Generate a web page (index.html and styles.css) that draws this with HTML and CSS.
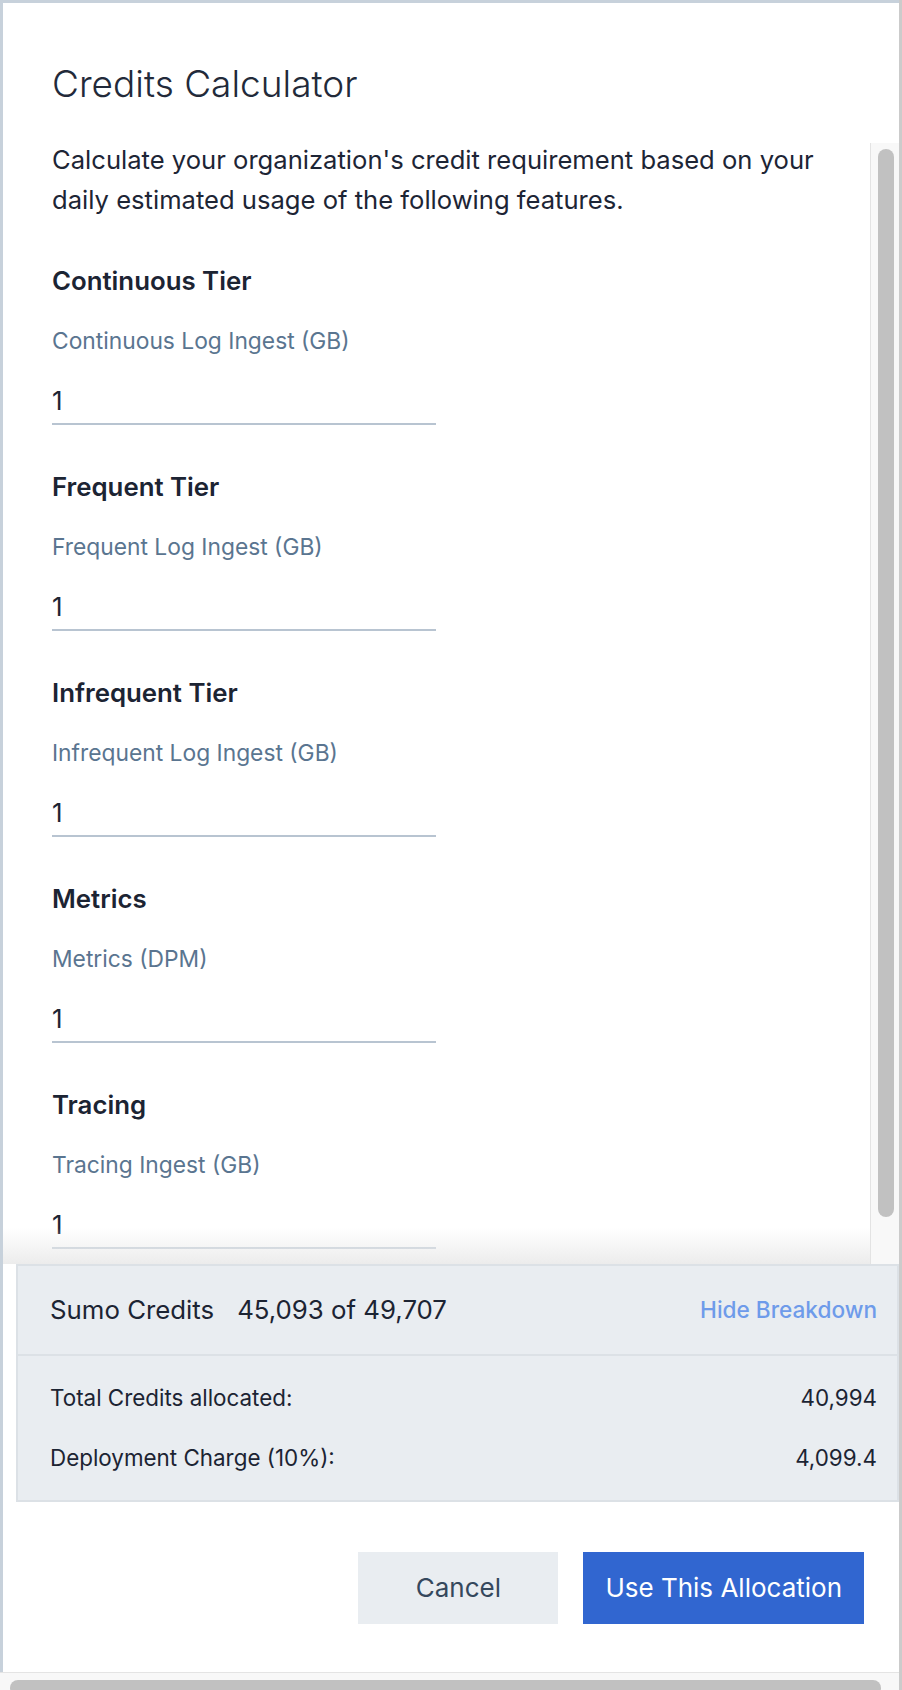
FILE: index.html
```html
<!DOCTYPE html>
<html lang="en">
<head>
<meta charset="utf-8">
<title>Credits Calculator</title>
<link rel="stylesheet" href="styles.css">
</head>
<body>
<div class="frame">
  <div class="dialog">
    <header class="dialog-header">
      <h1 class="title">Credits Calculator</h1>
    </header>
    <div class="scroll-wrap">
      <div class="scroll">
        <p class="intro">Calculate your organization's credit requirement based on your daily estimated usage of the following features.</p>
        <div class="sections">
          <section class="tier">
            <h2 class="tier-title">Continuous Tier</h2>
            <label class="field-label">Continuous Log Ingest (GB)</label>
            <input class="field-input" type="text" value="1">
          </section>
          <section class="tier">
            <h2 class="tier-title">Frequent Tier</h2>
            <label class="field-label">Frequent Log Ingest (GB)</label>
            <input class="field-input" type="text" value="1">
          </section>
          <section class="tier">
            <h2 class="tier-title">Infrequent Tier</h2>
            <label class="field-label">Infrequent Log Ingest (GB)</label>
            <input class="field-input" type="text" value="1">
          </section>
          <section class="tier">
            <h2 class="tier-title">Metrics</h2>
            <label class="field-label">Metrics (DPM)</label>
            <input class="field-input" type="text" value="1">
          </section>
          <section class="tier">
            <h2 class="tier-title">Tracing</h2>
            <label class="field-label">Tracing Ingest (GB)</label>
            <input class="field-input" type="text" value="1">
          </section>
        </div>
      </div>
      <div class="vscroll"><div class="vscroll-thumb"></div></div>
    </div>
    <div class="summary">
      <div class="summary-head">
        <span class="summary-name">Sumo Credits</span>
        <span class="summary-value">45,093 of 49,707</span>
        <span class="summary-toggle">Hide Breakdown</span>
      </div>
      <div class="breakdown">
        <div class="breakdown-row"><span>Total Credits allocated:</span><span>40,994</span></div>
        <div class="breakdown-row"><span>Deployment Charge (10%):</span><span>4,099.4</span></div>
      </div>
    </div>
    <footer class="dialog-footer">
      <button class="btn btn-secondary" type="button">Cancel</button>
      <button class="btn btn-primary" type="button">Use This Allocation</button>
    </footer>
  </div>
  <div class="hscroll"><div class="hscroll-thumb"></div></div>
</div>
</body>
</html>
```

FILE: styles.css
```css
* { box-sizing: border-box; }

html, body {
  margin: 0;
  padding: 0;
  background: #ffffff;
}

body {
  width: 902px;
  height: 1690px;
  overflow: hidden;
  font-family: Inter, "Noto Sans", "Liberation Sans", sans-serif;
  color: #1c2433;
}

.frame {
  display: flex;
  flex-direction: column;
  height: 1690px;
  border-right: 3px solid #cbcbcb;
}

.dialog {
  flex: 1;
  display: flex;
  flex-direction: column;
  border-top: 3px solid #c7d1db;
  border-left: 3px solid #c7d1db;
  min-height: 0;
}

.dialog-header {
  padding: 57px 49px 35px;
}

.title {
  margin: 0;
  font-family: "Inter Light", Inter, "Noto Sans", sans-serif;
  font-size: 37px;
  line-height: 48px;
  font-weight: 300;
  color: #222a3a;
}

.scroll-wrap {
  position: relative;
  display: flex;
  height: 1121px;
  flex: none;
}

.scroll-wrap::after {
  content: "";
  position: absolute;
  left: 0;
  right: 29px;
  bottom: 0;
  height: 36px;
  background: linear-gradient(to bottom, rgba(236, 236, 236, 0), rgba(236, 236, 236, 1));
  pointer-events: none;
}

.scroll {
  flex: 1;
  min-width: 0;
  overflow: hidden;
  padding: 0 0 58px 49px;
}

.vscroll {
  flex: none;
  width: 29px;
  background: #f8f8f8;
  border-left: 1px solid #e3e3e3;
  padding: 6px 5px 0 7px;
}

.vscroll-thumb {
  height: 1068px;
  border-radius: 8px;
  background: #c1c1c1;
}

.intro {
  margin: -3px 0 45px;
  font-size: 25.6px;
  line-height: 40px;
  color: #1d2535;
}

.sections {
  display: flex;
  flex-direction: column;
  gap: 46px;
}

.tier {
  display: flex;
  flex-direction: column;
  align-items: flex-start;
}

.tier-title {
  margin: 0 0 28px;
  font-size: 25.8px;
  line-height: 32px;
  font-weight: 600;
  color: #1c2433;
}

.field-label {
  display: block;
  margin: 0 0 23px;
  font-size: 22.8px;
  line-height: 32px;
  color: #5a7590;
}

.field-input {
  display: block;
  width: 384px;
  height: 45px;
  margin: 0;
  padding: 0 0 3px;
  border: 0;
  border-bottom: 2px solid #b8c4d1;
  background: transparent;
  font-family: inherit;
  font-size: 26px;
  line-height: 40px;
  color: #1c2433;
  outline: none;
}

.summary {
  flex: none;
  margin-left: 13px;
  background: #e9edf1;
  border: 2px solid #dce1e6;
}

.summary-head {
  display: flex;
  align-items: center;
  height: 90px;
  padding: 0 20px 0 32px;
  border-bottom: 2px solid #dce1e6;
  font-size: 25.8px;
  line-height: 32px;
}

.summary-name {
  color: #1c2433;
}

.summary-value {
  margin-left: 23px;
  color: #1c2433;
}

.summary-toggle {
  margin-left: auto;
  font-size: 22.6px;
  font-weight: 500;
  color: #6e9bea;
}

.breakdown {
  display: flex;
  flex-direction: column;
  gap: 28px;
  padding: 26px 20px 26px 32px;
}

.breakdown-row {
  display: flex;
  justify-content: space-between;
  font-size: 22.4px;
  line-height: 32px;
  color: #1c2433;
}

.dialog-footer {
  flex: none;
  display: flex;
  justify-content: flex-end;
  gap: 25px;
  padding: 50px 35px 46px 0;
}

.btn {
  height: 72px;
  min-width: 200px;
  padding: 0 22px;
  border: 0;
  border-radius: 0;
  font-family: inherit;
  font-size: 26px;
  line-height: 32px;
  cursor: pointer;
}

.btn-secondary {
  background: #e9edf1;
  color: #35485d;
}

.btn-primary {
  background: #3166d0;
  color: #ffffff;
}

.hscroll {
  flex: none;
  height: 18px;
  overflow: hidden;
  background: #f8f8f8;
  border-top: 1px solid #e4e4e4;
  padding: 7px 18px 0 10px;
}

.hscroll-thumb {
  height: 16px;
  border-radius: 8px;
  background: #c1c1c1;
}
```
